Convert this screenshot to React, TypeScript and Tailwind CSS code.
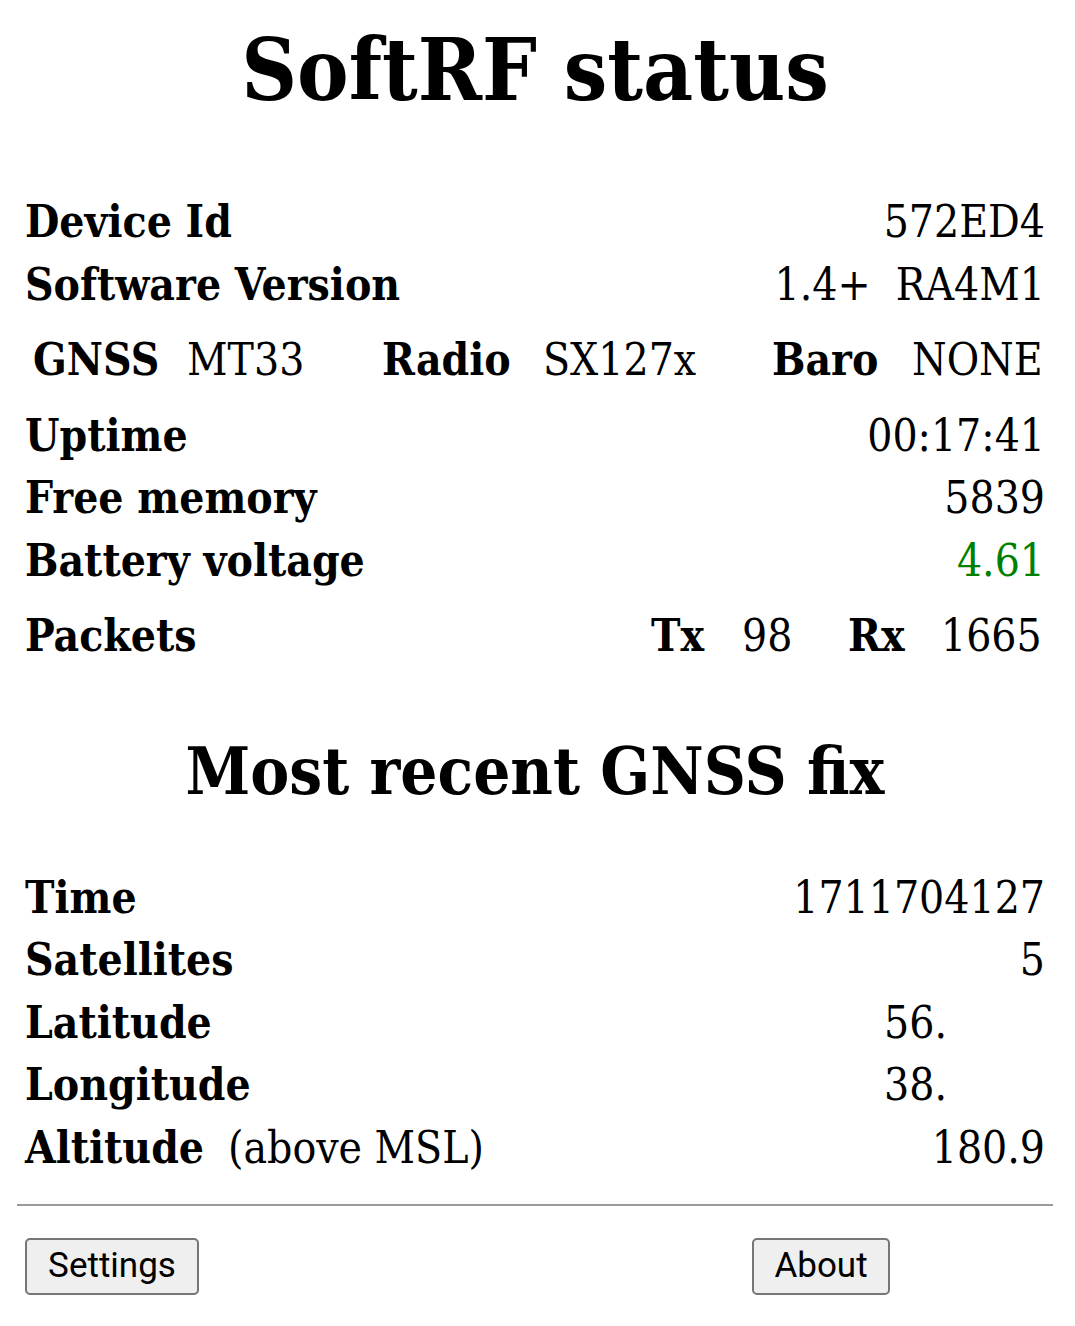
import React from 'react';

const serif = "font-['DejaVu_Serif_Condensed','DejaVu_Serif',serif]";

const Row = ({ label, value }: { label: React.ReactNode; value: React.ReactNode }) => (
  <div className="flex justify-between px-[8px] h-[62.5px] leading-[62.5px]">
    <span className="font-bold">{label}</span>
    <span>{value}</span>
  </div>
);

const App: React.FC = () => {
  return (
    <div className={`min-h-screen bg-white text-black pl-[17px] pr-[22px] ${serif}`}>
      {/* Header */}
      <h1 className="pt-[17px] text-center text-[86px] font-bold leading-[106px]">SoftRF status</h1>

      <div className="mt-[68px] text-[44px]">
        <Row label="Device Id" value="572ED4" />
        <Row label="Software Version" value={<span className="whitespace-pre">1.4+  RA4M1</span>} />

        {/* GNSS / Radio / Baro */}
        <div className="h-[88.5px] px-[8px] pt-[13px] leading-[62.5px]">
          <div className="grid grid-cols-[154px_195px_161px_229px_140px_1fr]">
            <span className="pl-[8px] font-bold">GNSS</span>
            <span className="pl-[8px]">MT33</span>
            <span className="pl-[8px] font-bold">Radio</span>
            <span className="pl-[8px]">SX127x</span>
            <span className="pl-[8px] font-bold">Baro</span>
            <span className="pl-[8px]">NONE</span>
          </div>
        </div>

        <Row label="Uptime" value="00:17:41" />
        <Row label="Free memory" value="5839" />
        <Row label="Battery voltage" value={<span className="text-[#008000]">4.61</span>} />

        {/* Packets */}
        <div className="h-[88.5px] px-[8px] pt-[13px] leading-[62.5px] flex justify-between">
          <span className="font-bold">Packets</span>
          <div className="grid grid-cols-[91px_106px_93px_104px]">
            <span className="font-bold">Tx</span>
            <span>98</span>
            <span className="font-bold">Rx</span>
            <span>1665</span>
          </div>
        </div>
      </div>

      <h2 className="mt-[50px] text-center text-[65px] font-bold leading-[80px]">Most recent GNSS fix</h2>

      <div className="mt-[56px] text-[44px]">
        <Row label="Time" value="1711704127" />
        <Row label="Satellites" value="5" />
        <Row label="Latitude" value={<span className="pr-[98px]">56.</span>} />
        <Row label="Longitude" value={<span className="pr-[98px]">38.</span>} />
        <Row
          label={
            <>
              Altitude<span className="ml-[24px] font-normal">(above MSL)</span>
            </>
          }
          value="180.9"
        />
      </div>

      <hr className="mt-[25px] border-0 border-t-2 border-[#9a9a9a]" />

      <div className="mt-[32px] flex px-[8px] font-['Roboto',sans-serif]">
        <button className="h-[57px] w-[174px] rounded-[5px] border-2 border-[#767676] bg-[#efefef] text-[35px] text-black">
          Settings
        </button>
        <button className="ml-[553px] h-[57px] w-[138px] rounded-[5px] border-2 border-[#767676] bg-[#efefef] text-[35px] text-black">
          About
        </button>
      </div>
    </div>
  );
};

export default App;
